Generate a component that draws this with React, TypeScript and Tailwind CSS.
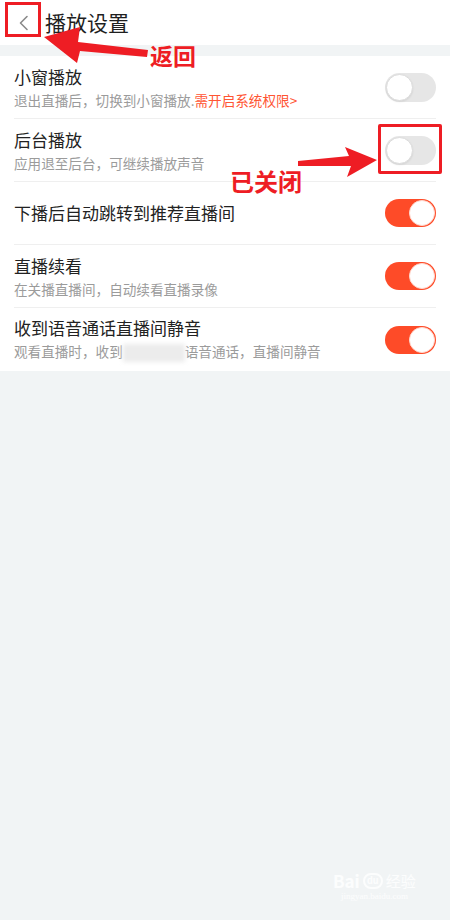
import React from 'react'

type Row = {
  title: string
  desc?: React.ReactNode
  on: boolean
}

const FONT = { fontFamily: '"Noto Sans CJK SC", "Noto Sans", sans-serif' }

function Toggle({ on }: { on: boolean }) {
  return on ? (
    <div className="relative h-[28px] w-[51px] shrink-0 rounded-full bg-[#fe4b28]">
      <div className="absolute right-[1px] top-[1px] h-[26px] w-[26px] rounded-full border border-[#ffd9cf] bg-white" />
    </div>
  ) : (
    <div className="relative h-[29px] w-[51px] shrink-0 rounded-full bg-[#e6e6e6]">
      <div className="absolute left-[1px] top-[1px] h-[27px] w-[27px] rounded-full border border-[#dcdcdc] bg-white shadow-[0_1px_2px_rgba(0,0,0,0.08)]" />
    </div>
  )
}

const rows: Row[] = [
  {
    title: '小窗播放',
    desc: (
      <>
        退出直播后，切换到小窗播放.<span className="text-[#ff5533]">需开启系统权限&gt;</span>
      </>
    ),
    on: false,
  },
  { title: '后台播放', desc: '应用退至后台，可继续播放声音', on: false },
  { title: '下播后自动跳转到推荐直播间', on: true },
  { title: '直播续看', desc: '在关播直播间，自动续看直播录像', on: true },
  {
    title: '收到语音通话直播间静音',
    desc: (
      <>
        观看直播时，收到
        <span className="inline-block h-[18px] w-[62px] align-middle bg-[#ececec] blur-[2px]" />
        语音通话，直播间静音
      </>
    ),
    on: true,
  },
]

export default function App() {
  return (
    <div className="relative h-[920px] w-[450px] overflow-hidden bg-[#f1f4f5]" style={FONT}>
      {/* header */}
      <header className="flex h-[45px] items-center bg-white">
        <div className="flex w-[45px] justify-center pl-[2px]">
          <svg width="12" height="16" viewBox="0 0 12 16" fill="none">
            <path d="M9 1.5 2.5 8 9 14.5" stroke="#8a8a8a" strokeWidth="1.6" strokeLinecap="round" strokeLinejoin="round" />
          </svg>
        </div>
        <h1 className="text-[21px] leading-none text-[#1f1f1f]">播放设置</h1>
      </header>

      <div className="h-[11px]" />

      {/* settings list */}
      <ul className="bg-white">
        {rows.map((r, i) => (
          <li key={r.title} className="px-[14px]">
            <div
              className={`flex h-[63px] items-center justify-between ${
                i < rows.length - 1 ? 'border-b border-[#efefef]' : ''
              }`}
            >
              <div className="flex flex-col">
                <p className="text-[17px] leading-[22px] text-[#222]">{r.title}</p>
                {r.desc && (
                  <p className="mt-[3px] whitespace-nowrap text-[13.6px] leading-[18px] text-[#9b9b9b]">{r.desc}</p>
                )}
              </div>
              <Toggle on={r.on} />
            </div>
          </li>
        ))}
      </ul>

      {/* watermark */}
      <div className="absolute left-[333px] top-[872px] flex flex-col items-center text-white/80">
        <div className="flex items-center gap-[3px] text-[17px] font-bold leading-none">
          <span>Bai</span>
          <span className="flex h-[16px] w-[20px] items-center justify-center rounded-[8px] border-2 border-white/80 text-[9px]">du</span>
          <span className="text-[15px] font-normal">经验</span>
        </div>
        <span className="mt-[3px] text-[9px] leading-none" style={{ fontFamily: '"Liberation Serif", serif' }}>
          jingyan.baidu.com
        </span>
      </div>

      {/* annotations */}
      <div className="pointer-events-none absolute left-[5px] top-[2px] h-[35px] w-[36px] border-[3px] border-[#ee1d24]" />
      <div className="pointer-events-none absolute left-[378px] top-[124px] h-[50px] w-[64px] rounded-[2px] border-[3px] border-[#ee1d24]" />

      <svg className="pointer-events-none absolute left-0 top-0" width="450" height="920">
        <polygon
          points="44,37 80,27 78,42 148,50 147,57 80,51 77,63"
          fill="#ee1d24"
        />
        <polygon
          points="298,161 349,156 345,147 377,160 347,177 351,166 298,166"
          fill="#ee1d24"
        />
      </svg>

      <span className="absolute left-[150px] top-[44px] text-[23px] font-bold leading-none text-[#ee1d24]">返回</span>
      <span className="absolute left-[230px] top-[169px] text-[24px] font-bold leading-none text-[#ee1d24]">已关闭</span>
    </div>
  )
}
